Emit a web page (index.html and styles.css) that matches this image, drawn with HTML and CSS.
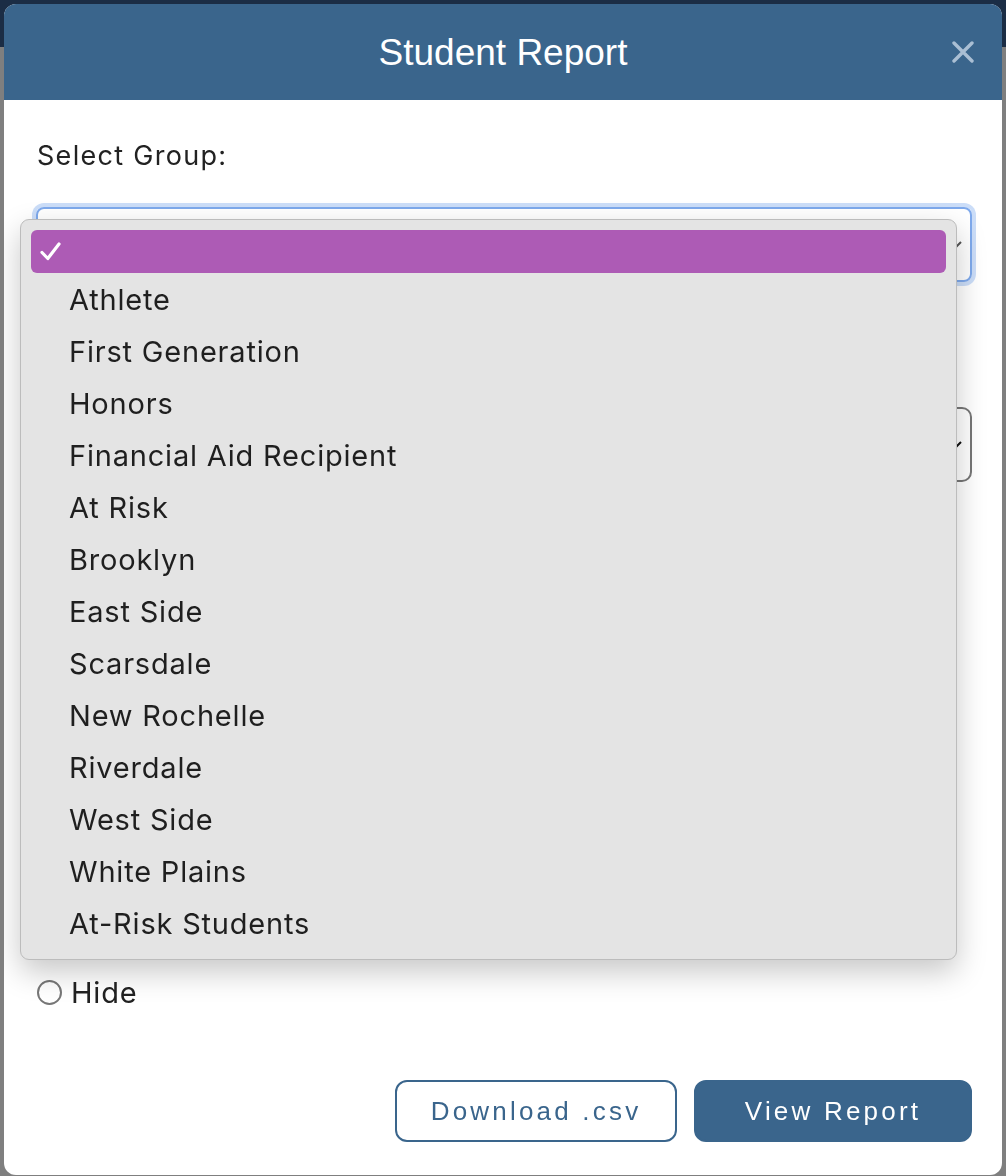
FILE: index.html
```html
<!DOCTYPE html>
<html lang="en">
<head>
  <meta charset="UTF-8" />
  <meta name="viewport" content="width=device-width, initial-scale=1.0" />
  <title>Student Report</title>
  <link rel="stylesheet" href="styles.css">
</head>
<body>
  <div class="page-bar"></div>

  <div class="modal">
    <div class="modal-header">
      <h1>Student Report</h1>
      <span class="close">
        <svg width="22" height="22" viewBox="0 0 22 22"><path d="M2 2 L20 20 M20 2 L2 20" stroke="#aabfd4" stroke-width="3.4" stroke-linecap="round"/></svg>
      </span>
    </div>

    <div class="modal-body">
      <label class="field-label">Select Group:</label>
      <div class="select focused">
        <svg class="chev" width="20" height="12" viewBox="0 0 20 12"><path d="M1 1 L10 10 L19 1" fill="none" stroke="#555" stroke-width="2"/></svg>
      </div>

      <!-- second select sits under the open popup -->
      <div class="select second">
        <svg class="chev" width="20" height="12" viewBox="0 0 20 12"><path d="M1 1 L10 10 L19 1" fill="none" stroke="#111" stroke-width="2"/></svg>
      </div>

      <div class="radio-row"><span class="radio"></span>Hide</div>

      <div class="actions">
        <button class="btn btn-outline">Download .csv</button>
        <button class="btn btn-primary">View Report</button>
      </div>
    </div>

    <!-- native select popup, open -->
    <ul class="popup">
      <li class="selected">
        <svg class="check" width="21" height="19" viewBox="0 0 21 19"><path d="M2 10.5 L7.8 16.5 L19 2" fill="none" stroke="#fff" stroke-width="3.2" stroke-linecap="round" stroke-linejoin="round"/></svg>
      </li>
      <li>Athlete</li>
      <li>First Generation</li>
      <li>Honors</li>
      <li>Financial Aid Recipient</li>
      <li>At Risk</li>
      <li>Brooklyn</li>
      <li>East Side</li>
      <li>Scarsdale</li>
      <li>New Rochelle</li>
      <li>Riverdale</li>
      <li>West Side</li>
      <li>White Plains</li>
      <li>At-Risk Students</li>
    </ul>
  </div>
</body>
</html>
```

FILE: styles.css
```css
body {
  margin: 0;
  height: 1176px;
  overflow: hidden;
  background: #7f7f7f;
  font-family: "Inter", "Liberation Sans", sans-serif;
}

.page-bar {
  height: 47px;
  background: #1b2d45;
}

.modal {
  position: fixed;
  left: 4px;
  top: 4px;
  width: 998px;
  height: 1171px;
  background: #fff;
  border-radius: 12px;
  overflow: hidden;
  display: flex;
  flex-direction: column;
}

.modal-header {
  height: 96px;
  background: #3a658c;
  display: flex;
  align-items: center;
  justify-content: center;
  position: relative;
  flex-shrink: 0;
}

.modal-header h1 {
  margin: 0;
  color: #fff;
  font-family: "Liberation Sans", Arial, sans-serif;
  font-weight: normal;
  font-size: 37px;
  padding-top: 2px;
}

.close {
  position: absolute;
  right: 28px;
  top: 37px;
  width: 22px;
  height: 22px;
}

.modal-body {
  flex: 1;
  display: flex;
  flex-direction: column;
  padding: 40px 30px 33px 32px;
}

.field-label {
  display: block;
  font-size: 27px;
  line-height: 32px;
  color: #222;
  letter-spacing: 1.3px;
  padding-left: 1px;
}

.select {
  margin-top: 35px;
  height: 71px;
  width: 932px;
  border: 2px solid #777;
  border-radius: 10px;
  position: relative;
}

.select.focused {
  border-color: #7ea9ec;
  box-shadow: 0 0 0 4px rgba(140, 180, 240, 0.45);
  border-radius: 8px;
}

.select.second {
  margin-top: 125px;
}

.chev {
  position: absolute;
  right: 8px;
  top: 32px;
}

.radio-row {
  margin-top: 492px;
  display: flex;
  align-items: center;
  gap: 9px;
  height: 36px;
  font-size: 29px;
  letter-spacing: 0.8px;
  color: #222;
}

.radio {
  width: 21px;
  height: 21px;
  border: 2px solid #777;
  border-radius: 50%;
  margin-left: 1px;
}

.actions {
  margin-top: auto;
  display: flex;
  justify-content: flex-end;
  gap: 17px;
}

.btn {
  height: 62px;
  border-radius: 12px;
  font-family: "Liberation Sans", Arial, sans-serif;
  font-size: 26px;
  letter-spacing: 3.2px;
  cursor: pointer;
}

.btn-outline {
  width: 282px;
  background: #fff;
  border: 2px solid #3a658c;
  color: #3a658c;
}

.btn-primary {
  width: 278px;
  background: #3a658c;
  border: 2px solid #3a658c;
  color: #fff;
}

.popup {
  position: absolute;
  left: 16px;
  top: 215px;
  width: 937px;
  margin: 0;
  padding: 10px;
  list-style: none;
  background: #e4e4e4;
  border: 1px solid #bcbcbc;
  border-radius: 9px;
  box-shadow: 0 12px 30px rgba(0, 0, 0, 0.22);
  box-sizing: border-box;
}

.popup li {
  height: 52px;
  display: flex;
  align-items: center;
  padding-left: 38px;
  font-size: 29px;
  letter-spacing: 0.8px;
  color: #1f1f1f;
}

.popup li.selected {
  height: 43px;
  background: #ad5bb5;
  border-radius: 6px;
  padding-left: 9px;
}
```
